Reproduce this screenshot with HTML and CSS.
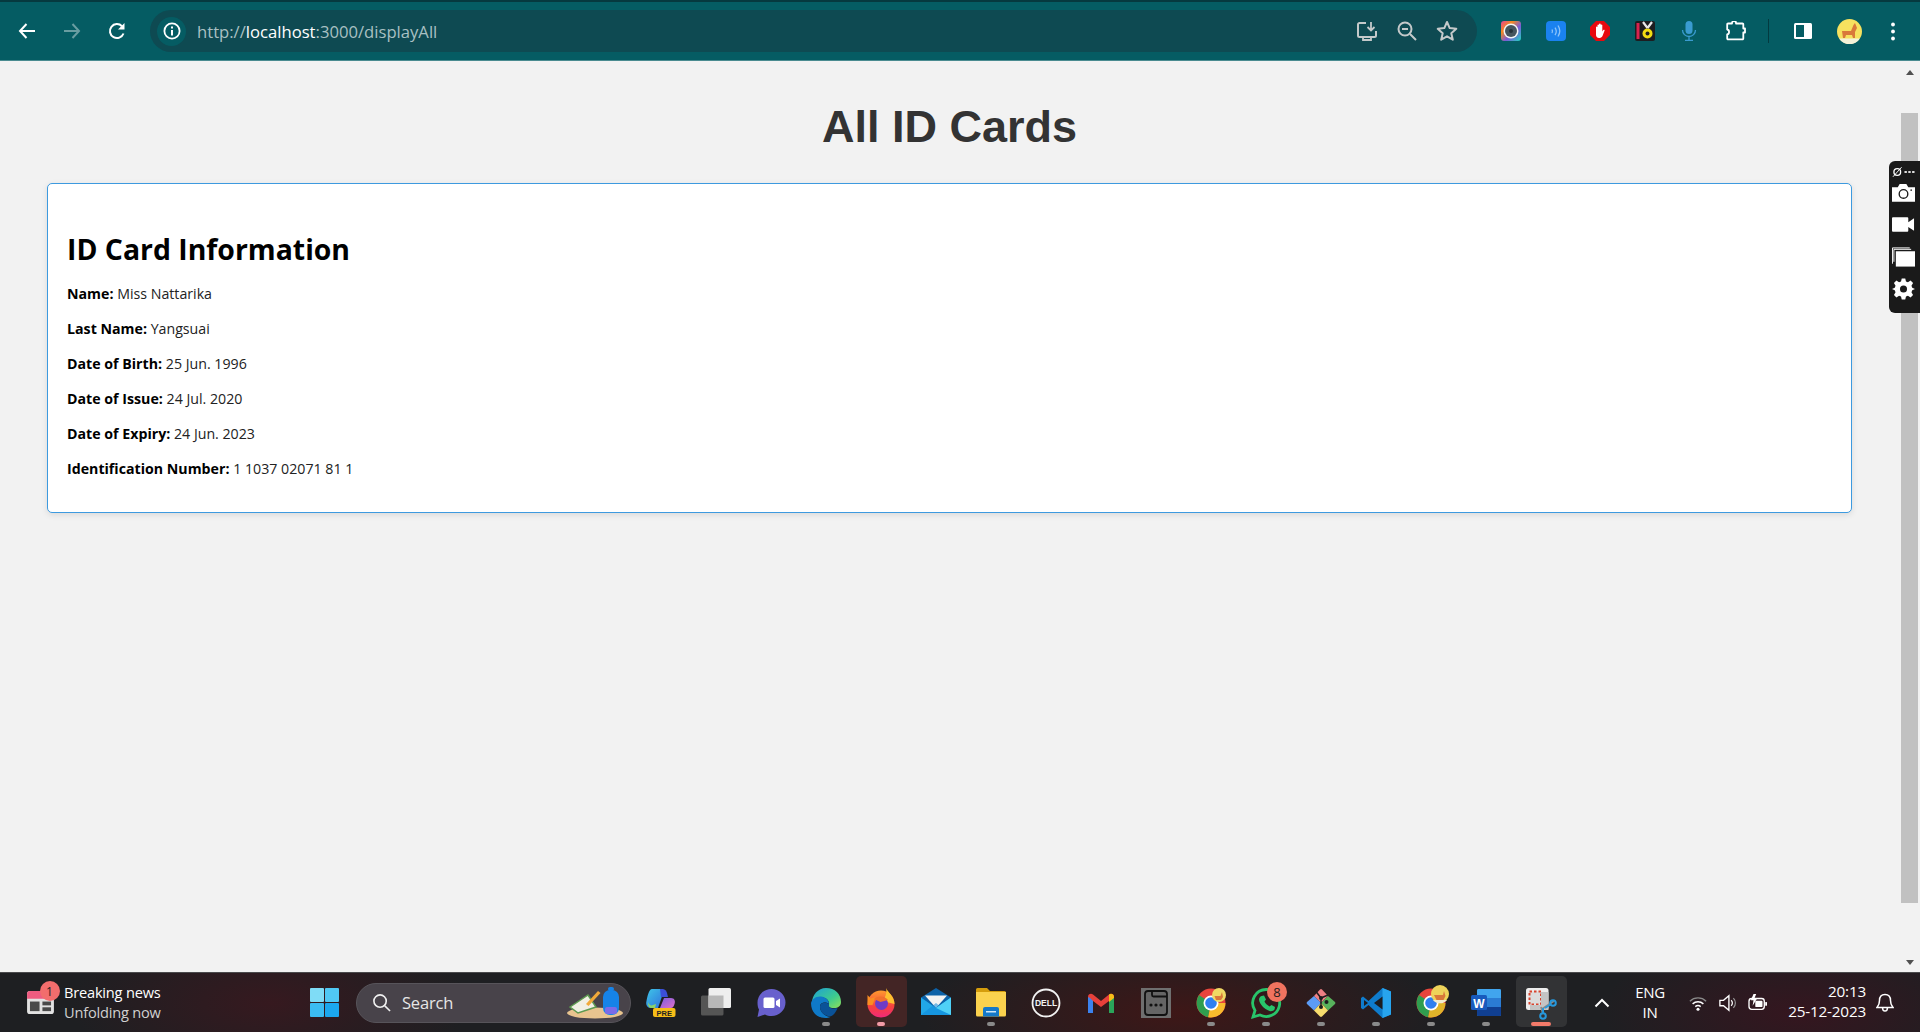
FILE: index.html
```html
<!DOCTYPE html>
<html lang="en">
<head>
<meta charset="utf-8">
<title>All ID Cards</title>
<link rel="stylesheet" href="styles.css">
</head>
<body>
<header class="browser">
  <div class="tabstrip"></div>
  <div class="toolbar">
    <div class="nav">
      <svg class="nav-icon" viewBox="0 0 24 24"><path d="M20 12H5M11.5 5 5 12l6.500 7" fill="none" stroke="#fff" stroke-width="2"/></svg>
      <svg class="nav-icon dim" viewBox="0 0 24 24"><path d="M4 12h15M12.500 5 19 12l-6.500 7" fill="none" stroke="#fff" stroke-width="2"/></svg>
      <svg class="nav-icon" viewBox="0 0 24 24"><path d="M18.500 14.500A7 7 0 1 1 17 7.200" fill="none" stroke="#fff" stroke-width="2"/><path d="M19.500 4v6.500H13z" fill="#fff"/></svg>
    </div>
    <div class="omnibox">
      <span class="site-info"><svg viewBox="0 0 20 20"><circle cx="10" cy="10" r="7.600" fill="none" stroke="#fff" stroke-width="1.800"/><path d="M9 9h2v5.500H9zM9 5.500h2v2H9z" fill="#fff"/></svg></span>
      <span class="url">http://<b>localhost</b>:3000/displayAll</span>
      <span class="omni-actions">
        <svg class="omni-icon" viewBox="0 0 24 24"><path d="M11 4H4.500A1.500 1.500 0 0 0 3 5.500v11A1.500 1.500 0 0 0 4.500 18h15a1.500 1.500 0 0 0 1.500-1.500V12" fill="none" stroke="#c4c9ca" stroke-width="2"/><path d="M8 21h8v-3H8zM16 3v8M12.500 8l3.500 3.500L19.500 8" fill="none" stroke="#c4c9ca" stroke-width="1.800"/></svg>
        <svg class="omni-icon" viewBox="0 0 24 24"><circle cx="10" cy="10" r="6.500" fill="none" stroke="#c4c9ca" stroke-width="2"/><path d="M7 10h6M15 15l6 6" stroke="#c4c9ca" stroke-width="2"/></svg>
        <svg class="omni-icon" viewBox="0 0 24 24"><path d="m12 3 2.700 6.100 6.600.7-5 4.400 1.500 6.500-5.800-3.400-5.800 3.400 1.500-6.500-5-4.400 6.600-.7z" fill="none" stroke="#c4c9ca" stroke-width="2" stroke-linejoin="round"/></svg>
      </span>
    </div>
    <div class="extensions">
      <svg class="ext" viewBox="0 0 20 20"><defs><linearGradient id="camg" x1="0" y1="0" x2="1" y2="1"><stop offset="0" stop-color="#e8439a"/><stop offset=".3" stop-color="#f58a1f"/><stop offset=".6" stop-color="#7a5bd6"/><stop offset="1" stop-color="#20d6c0"/></linearGradient></defs><rect width="20" height="20" rx="3" fill="url(#camg)"/><circle cx="10" cy="10" r="7.500" fill="#f3f5f6"/><circle cx="10" cy="10" r="6" fill="#46555e"/><circle cx="10" cy="10" r="2" fill="#26323a"/></svg>
      <svg class="ext" viewBox="0 0 20 20"><rect width="20" height="20" rx="4" fill="#1a82f0"/><path d="M6 8.500a3.500 3.500 0 0 1 0 3.500M9 6.500a6.500 6.500 0 0 1 0 7.500M12 4.500a10 10 0 0 1 0 11" fill="none" stroke="#8fc5fa" stroke-width="1.300"/></svg>
      <svg class="ext" viewBox="0 0 20 20"><path d="M6 0h8l6 6v8l-6 6H6l-6-6V6z" fill="#e8090f"/><path d="M6 10V6a.8.8 0 0 1 1.500 0V4a.8.8 0 0 1 1.500 0V3.500a.8.8 0 0 1 1.800 0V4a.8.8 0 0 1 1.500 0v6.500l1-1.500c.8-.8 1.700 0 1.200.8L12.500 15c-.8 1.500-2 2-3.500 2-2 0-3-1.500-3-3z" fill="#fff"/></svg>
      <svg class="ext" viewBox="0 0 20 20"><rect width="20" height="20" rx="2" fill="#1d1d20"/><rect x="1.500" y="2" width="3" height="16" fill="#d8234f"/><circle cx="12.500" cy="12.500" r="5" fill="#f2dc12"/><circle cx="12.500" cy="12.500" r="2" fill="#1d1d20"/><path d="M8 1l4.500 6M17 1l-4.500 6" stroke="#e8e8e8" stroke-width="2.200"/></svg>
      <svg class="ext" viewBox="0 0 20 20"><rect x="6.500" y="0" width="7" height="13" rx="3.500" fill="#3a9bd0"/><path d="M3.500 9a6.500 6.500 0 0 0 13 0M10 15.500V19M6 19.500h8" fill="none" stroke="#3a9bd0" stroke-width="1.300"/></svg>
      <svg class="ext puzzle" viewBox="0 0 20 20"><path d="M6 2.500V2a2 2 0 0 1 4 0v.500h6.500a.8.8 0 0 1 .8.8V7.500h1.700v4h-1.700v6a.8.8 0 0 1-.8.8H2a.8.8 0 0 1-.8-.8v-4c2.500-.5 2.500-4.500 0-5V3.300a.8.8 0 0 1 .8-.8z" fill="none" stroke="#fff" stroke-width="1.800" stroke-linejoin="round"/></svg>
      <span class="ext-sep"></span>
      <svg class="ext" viewBox="0 0 20 20"><rect x="1" y="2" width="18" height="16" rx="1.500" fill="#fff"/><rect x="3" y="4" width="8" height="12" fill="#055c63"/></svg>
      <svg class="avatar" viewBox="0 0 25 25"><circle cx="12.500" cy="12.500" r="12.500" fill="#f6e15f"/><path d="M5 12h9l2.500-6 1.500-2 2 5-2 4v6h-2l-1-3H9l-1 3H6z" fill="#d9783a"/><path d="M2 19.500h21a12.500 12.500 0 0 1-21 0z" fill="#f4f1d8"/></svg>
      <svg class="menu" viewBox="0 0 6 24"><circle cx="3" cy="4" r="2.200" fill="#fff"/><circle cx="3" cy="12" r="2.200" fill="#fff"/><circle cx="3" cy="20" r="2.200" fill="#fff"/></svg>
    </div>
  </div>
</header>

<div class="viewport">
  <main class="page">
    <h1 class="title">All ID Cards</h1>
    <section class="card">
      <h2 class="card-title">ID Card Information</h2>
      <p class="row"><strong>Name:</strong> Miss Nattarika</p>
      <p class="row"><strong>Last Name:</strong> Yangsuai</p>
      <p class="row"><strong>Date of Birth:</strong> 25 Jun. 1996</p>
      <p class="row"><strong>Date of Issue:</strong> 24 Jul. 2020</p>
      <p class="row"><strong>Date of Expiry:</strong> 24 Jun. 2023</p>
      <p class="row"><strong>Identification Number:</strong> 1 1037 02071 81 1</p>
    </section>
  </main>
  <div class="scrollbar">
    <span class="arrow up"></span>
    <span class="thumb"></span>
    <span class="arrow down"></span>
  </div>
  <aside class="capture">
    <svg class="cap-top" viewBox="0 0 24 10"><circle cx="5.500" cy="5" r="3.500" fill="none" stroke="#fff" stroke-width="1.400"/><path d="M1 10 10 0" stroke="#fff"/><path d="M13 4h2.500v2H13zM17 4h2.500v2H17zM21 4h2.500v2H21z" fill="#ddd"/></svg>
    <svg class="cap-icon" viewBox="0 0 24 20"><path d="M0 4h6l2-3.500h7L17 4h7v15H0z" fill="#fff"/><circle cx="12" cy="11" r="4.500" fill="none" stroke="#1a1a1a" stroke-width="1.400"/><circle cx="20" cy="7" r=".8" fill="#1a1a1a"/></svg>
    <svg class="cap-icon" viewBox="0 0 24 20"><path d="M1 2h15a1 1 0 0 1 1 1v4l6-4v13l-6-4v4a1 1 0 0 1-1 1H1a1 1 0 0 1-1-1V3a1 1 0 0 1 1-1z" fill="#fff"/></svg>
    <svg class="cap-icon" viewBox="0 0 24 20"><path d="M4 4h20v16H4z" fill="#fff"/><path d="M.5 17V.5h18" fill="none" stroke="#fff"/><path d="M2 15V2h18" fill="none" stroke="#fff"/></svg>
    <svg class="cap-icon" viewBox="-1 -1 26 26"><path d="M10 0h4l.8 3.400 2.200.9 3-1.800 2.800 2.800-1.800 3 .9 2.200L25 12l-3.100 1.500-.9 2.200 1.800 3-2.800 2.800-3-1.800-2.200.9L14 24h-4l-.8-3.400-2.200-.9-3 1.800-2.800-2.800 1.800-3-.9-2.200L-1 12l3.100-1.500.9-2.200-1.800-3L4 2.500l3 1.800 2.200-.9z" fill="#fff"/><circle cx="12" cy="12" r="4" fill="#1a1a1a"/></svg>
  </aside>
</div>

<footer class="taskbar">
  <div class="news">
    <span class="news-icon">
      <svg viewBox="0 2 28 24"><rect y="2" width="28" height="24" rx="3" fill="#e2e2e2"/><path d="M0 5a3 3 0 0 1 3-3h22a3 3 0 0 1 3 3v5H0z" fill="#ee5b80"/><rect x="3" y="13" width="10" height="10" fill="#4a4a4a"/><rect x="16" y="13" width="9" height="4" fill="#4a4a4a"/><rect x="16" y="19" width="9" height="4" fill="#4a4a4a"/></svg>
      <span class="badge news-badge">1</span>
    </span>
    <span class="news-text"><span>Breaking news</span><span class="muted">Unfolding now</span></span>
  </div>
  <svg class="win" viewBox="0 0 29 29"><rect width="14" height="14" rx="1" fill="#7fdcf6"/><rect x="15" width="14" height="14" rx="1" fill="#50c8f4"/><rect y="15" width="14" height="14" rx="1" fill="#3bbcf2"/><rect x="15" y="15" width="14" height="14" rx="1" fill="#1ba7ee"/></svg>
  <div class="search">
    <svg class="search-icon" viewBox="0 0 20 20"><circle cx="8.500" cy="8.500" r="6.500" fill="none" stroke="#f0f0f0" stroke-width="1.700"/><path d="m13.500 13.500 5.500 5.500" stroke="#f0f0f0" stroke-width="1.700"/></svg>
    <span class="search-text">Search</span>
    <svg class="search-art" viewBox="0 0 58 32"><ellipse cx="29" cy="26" rx="28" ry="5.500" fill="#e8c48f"/><path d="M4 20 22 8l8 12-18 6z" fill="#f1efe4" stroke="#5d9a50" stroke-width="1.500"/><path d="m20 17 12-13 2.500 2-12 13z" fill="#f1a93a"/><rect x="37" y="3" width="16" height="25" rx="7" fill="#1683e8"/><rect x="42" y="0" width="6" height="4" rx="2" fill="#1683e8"/><rect x="39" y="20" width="12" height="7" rx="2" fill="#7b6be8"/></svg>
  </div>
  <div class="apps">
    <span class="app"><svg viewBox="0 0 30 30"><defs><linearGradient id="cp1" x1="0" y1="0" x2="1" y2="1"><stop offset="0" stop-color="#3ec6e8"/><stop offset="1" stop-color="#2f6fdc"/></linearGradient><linearGradient id="cp2" x1="0" y1="0" x2="1" y2="1"><stop offset="0" stop-color="#7a5ce0"/><stop offset="1" stop-color="#e070c8"/></linearGradient></defs><path d="M6 1h9c2.500 0 3 2 2.500 3L12 20H5C1 20-.5 16.500.5 13 1.500 8 3 1 6 1z" fill="url(#cp1)"/><path d="M14 1h2c3 0 4.500 2 5 4l1 4h-7z" fill="#3b4fd8"/><path d="M14 20l4-10h7c3.500 0 4.500 3 3.500 6-1 3-2 4-3.500 4z" fill="url(#cp2)"/><path d="M2 14c1 3 3 4 5 3l3-1-1 4H5c-2 0-3-2-3-6z" fill="#8bd16a"/><rect x="7" y="20" width="22.500" height="9" rx="2" fill="#f6bd18"/><text x="18.300" y="27.500" class="pre">PRE</text></svg></span>
    <span class="app"><svg viewBox="0 0 30 30"><rect y="7.500" width="22.500" height="20" rx="1.500" fill="#555"/><rect x="7.500" width="22.500" height="20" rx="1.500" fill="#eee"/><rect x="7.500" y="7.500" width="15" height="12.500" fill="#b8b8b8"/></svg></span>
    <span class="app"><svg viewBox="0 0 30 30"><path d="M15.500 1a14 13.500 0 0 1 0 27c-2.500 0-4.500-.5-6.500-1.500L1.500 29 3 21.500C1.800 19.500 1.500 17 1.500 14.500A14 13.500 0 0 1 15.500 1z" fill="#6860cd"/><rect x="7.500" y="9.500" width="11" height="10.500" rx="1.500" fill="#fff"/><path d="m20 13 4-2.500v9L20 17z" fill="#fff"/></svg></span>
    <span class="app dot"><svg viewBox="0 0 30 30"><defs><linearGradient id="edg" x1="0" y1="0" x2="1" y2="1"><stop offset="0" stop-color="#1d9fd8"/><stop offset=".6" stop-color="#3dcb8e"/><stop offset="1" stop-color="#8fe05a"/></linearGradient></defs><path d="M15 0c9 0 15 6 15 14 0 4-3 6-7 6-5 0-6-1.500-5-4 0-4-3-6.500-7-6.500S3 12 1 15C1 7 7 0 15 0z" fill="url(#edg)"/><path d="M0 15c1-4 5-7 10-6.500 4 .5 8 3 8 7.500-2-2-9-2.500-9 3 0 5 6 11 11.500 9.500C18 30 16 30 14.500 30 6 30 0 24 0 15z" fill="#0f79c8"/><path d="M9 19c0-5 6-5 9-3-.5 3 1 4.500 5 4.500 2 0 3-.5 3.500 0-2 4-4 6.500-6 7.500C14 29 9 24 9 19z" fill="#0a5298"/></svg></span>
    <span class="app active rose"><svg viewBox="0 0 30 30"><defs><linearGradient id="ffg" x1="0" y1="0" x2="0" y2="1"><stop offset="0" stop-color="#ff9a2e"/><stop offset=".6" stop-color="#f5413f"/><stop offset="1" stop-color="#f0297a"/></linearGradient></defs><circle cx="15" cy="16" r="13.500" fill="url(#ffg)"/><path d="M20 0c1.500 4 8.500 8 8.500 16l-8-2C15 12 22 8 20 0z" fill="#fdc02f"/><path d="M1.500 7l3 3.500 5-1.500-3 8H1.500z" fill="#fb8e22"/><circle cx="15.500" cy="15.500" r="6.500" fill="#6d3bc6"/><path d="M8 11c4-4 11-3 14 1l-7.500 2z" fill="#f2702c"/></svg></span>
    <span class="app"><svg viewBox="0 0 30 30"><path d="M0 9.500 15 0l15 9.500V27H0z" fill="#0c62a8"/><path d="M4 7.500h22L15 20z" fill="#f2f2f2"/><path d="M0 9.500V27h30V9.500L15 20z" fill="#21a7e8"/><path d="M0 27 15 15l15 12z" fill="#0f88d8" opacity=".55"/><path d="M15 20 30 9.500V27z" fill="#4fd0f6"/></svg></span>
    <span class="app dot"><svg viewBox="0 0 30 30"><path d="M0 1.500A1.500 1.500 0 0 1 1.500 0H11l3 3h14.500A1.500 1.500 0 0 1 30 4.500V8H0z" fill="#d59d0c"/><path d="M0 4h30v23a1.500 1.500 0 0 1-1.500 1.500h-27A1.500 1.500 0 0 1 0 27z" fill="#fbd24e"/><path d="M7 21a2 2 0 0 1 2-2h12a2 2 0 0 1 2 2v7.500H7z" fill="#1579c9"/><rect x="10" y="23" width="10" height="1.500" fill="#cfe7f7"/></svg></span>
    <span class="app"><svg viewBox="0 0 30 30"><circle cx="15" cy="15" r="13.500" fill="none" stroke="#f2f2f2" stroke-width="1.800"/><text x="15" y="18" class="dell">DELL</text></svg></span>
    <span class="app"><svg viewBox="0 0 30 30"><path d="M2 9c0-3 3-4 5-2.500L15 13l8-6.500c2-1.500 5-.5 5 2.500v16h-5V13l-8 6-8-6v12H2z" fill="#e7403a"/><path d="M2 9v16h5V13l-3-3z" fill="#3b82ee"/><path d="M23 13v12h5V9z" fill="#2aa55a"/><path d="M23 6.500c2-1.500 5-.5 5 2.500v1l-5 4z" fill="#f6bd18"/></svg></span>
    <span class="app"><svg viewBox="0 0 30 30"><rect width="30" height="30" fill="#6f6f6f"/><path d="M4 6a3 3 0 0 1 3-3h16a3 3 0 0 1 3 3v18a3 3 0 0 1-3 3H7a3 3 0 0 1-3-3z" fill="#656565" stroke="#111" stroke-width="1.800"/><path d="M11 3v4a1.500 1.500 0 0 0 1.500 1.500H26" fill="none" stroke="#111" stroke-width="1.800"/><circle cx="10" cy="17" r="1.600" fill="#111"/><circle cx="15" cy="17" r="1.600" fill="#111"/><circle cx="20" cy="17" r="1.600" fill="#111"/></svg></span>
    <span class="app dot"><svg viewBox="0 0 30 30"><circle cx="15" cy="15" r="14.500" fill="#e8453c"/><path d="M15 15H29.500A14.500 14.500 0 0 1 12 29.200z" fill="#f9bb2d"/><path d="M12 29.200 A14.500 14.500 0 0 1 3 7l12 8z" fill="#2f9e4f"/><circle cx="15" cy="15" r="7.500" fill="#fff"/><circle cx="15" cy="15" r="5.800" fill="#2f7ff0"/><circle cx="23" cy="7" r="7" fill="#f0d964"/><path d="M18.500 8h6l1.500-4 1 5-2 3h-5z" fill="#d9783a"/></svg></span>
    <span class="app dot"><svg viewBox="0 0 30 30"><path d="M15.500 1.500a13.500 13.500 0 1 1-6.500 25.500L2 29l2-6.500A13.500 13.500 0 0 1 15.500 1.500z" fill="none" stroke="#28c46a" stroke-width="2.800"/><path d="M10.500 8l2.500-.5 2 4-1.500 2c1 2 2.500 3.500 5 5l2-1.500 3.500 2-.5 2.500c-1 1.500-3 2-5 1.500C13 21 8.500 16 8 11.500c0-1.500 1-3 2.500-3.500z" fill="#28c46a"/></svg><span class="badge app-badge">8</span></span>
    <span class="app dot"><svg viewBox="0 0 30 30"><path d="M15 15 8 8l6-6.500a1.500 1.500 0 0 1 2 0l6 6.500z" fill="#ee7f84"/><path d="M15 15l-7-7-7 6a1.500 1.500 0 0 0 0 2l7 6.500z" fill="#5c9bf6"/><path d="M15 15l7-7 7 6a1.500 1.500 0 0 1 0 2l-7 6.500z" fill="#58b25c"/><path d="M15 15l-7 7.500 6 6a1.500 1.500 0 0 0 2 0l6-6z" fill="#f8dc6d"/><path d="M10 3.500 15 10l7-3M15 10v9" fill="none" stroke="#1d1d20" stroke-width="1.500"/><circle cx="15" cy="19" r="2" fill="#1d1d20"/><circle cx="20.500" cy="14" r="2" fill="#1d1d20"/><circle cx="15" cy="10" r="2" fill="#1d1d20"/></svg></span>
    <span class="app dot"><svg viewBox="0 0 30 30"><path d="M21.500 0 30 3.500v23L21.500 30 7.500 17 2 21.500 0 20V10l2-1.500L7.500 13z" fill="#0f7ccc"/><path d="M21.500 0 30 3.500v23L21.500 30z" fill="#27a4ee"/><path d="M21.500 8.500v13L13 15z" fill="#1d1d20"/><path d="M3 12l4 3-4 3z" fill="#1d1d20"/></svg></span>
    <span class="app dot"><svg viewBox="0 0 30 30"><circle cx="15" cy="15" r="14.500" fill="#e8453c"/><path d="M15 15H29.500A14.500 14.500 0 0 1 12 29.200z" fill="#e0b42a"/><path d="M12 29.200 A14.500 14.500 0 0 1 3 7l12 8z" fill="#2f9e4f"/><circle cx="15" cy="15" r="7.500" fill="#fff"/><circle cx="15" cy="15" r="5.800" fill="#2f7ff0"/><circle cx="24" cy="6" r="9" fill="#eed35a"/><path d="M18 7h9l1-4 1.500 5-2 4h-7z" fill="#d9783a"/><path d="M17 12h14a9 9 0 0 1-14 0z" fill="#f2ecd0"/></svg></span>
    <span class="app dot"><svg viewBox="0 0 30 30"><rect x="6" y="1" width="24" height="27" rx="1.500" fill="#2b7cd3"/><path d="M6 2.500A1.500 1.500 0 0 1 7.500 1h21A1.500 1.500 0 0 1 30 2.500V10H6z" fill="#41a5ee"/><path d="M6 19h24v7.500a1.500 1.500 0 0 1-1.500 1.500h-21A1.500 1.500 0 0 1 6 26.500z" fill="#103f91"/><rect y="7" width="16" height="15" rx="1.500" fill="#185abd"/><text x="8" y="19.500" class="word">W</text></svg></span>
    <span class="app active snip"><svg viewBox="0 0 30 30"><rect y="0" width="22.500" height="22" rx="2.500" fill="#ededed"/><rect x="3.500" y="3.500" width="11.500" height="13" fill="#dcdcdc" stroke="#d8432d" stroke-width="2" stroke-dasharray="2.500 2"/><path d="M15 4h7.500v18H4v-5h11z" fill="#c4c4c4"/><path d="M28 13 16 21M15 19l2 7" stroke="#8a8a8a" stroke-width="1.800"/><circle cx="27" cy="15" r="2.800" fill="none" stroke="#2698dc" stroke-width="2"/><circle cx="17" cy="28" r="2.800" fill="none" stroke="#2698dc" stroke-width="2"/><path d="M24.500 16.500 19 20M17 20v5" stroke="#2698dc" stroke-width="2"/></svg></span>
  </div>
  <div class="tray">
    <svg class="chev" viewBox="0 0 16 10"><path d="M1.500 8.500 8 2l6.500 6.500" fill="none" stroke="#fff" stroke-width="2"/></svg>
    <span class="lang"><span>ENG</span><span>IN</span></span>
    <span class="tray-icons">
      <svg viewBox="0 0 20 20"><path d="M1 8a13 13 0 0 1 18 0" fill="none" stroke="#8a8a8a" stroke-width="1.500"/><path d="M4 11a9 9 0 0 1 12 0M7 14a5 5 0 0 1 6 0" fill="none" stroke="#fff" stroke-width="1.600"/><circle cx="10" cy="17" r="1.700" fill="#fff"/></svg>
      <svg viewBox="0 0 20 20"><path d="M1 7h4l6-5v16l-6-5H1z" fill="none" stroke="#fff" stroke-width="1.500"/><path d="M13.500 7a4 4 0 0 1 0 6" fill="none" stroke="#fff" stroke-width="1.400"/><path d="M16 4.500a8 8 0 0 1 0 11" fill="none" stroke="#999" stroke-width="1.300"/></svg>
      <svg viewBox="0 0 22 20"><rect x="1" y="5" width="17" height="12" rx="3" fill="none" stroke="#fff" stroke-width="1.500"/><rect x="8" y="7.500" width="8" height="7" rx="1" fill="#fff"/><path d="M6 0 3 7h3l-1 6 5-8H7l2-5z" fill="#fff"/><rect x="19" y="9" width="2" height="4" fill="#fff"/></svg>
    </span>
    <span class="clock"><span>20:13</span><span>25-12-2023</span></span>
    <svg class="bell" viewBox="0 0 18 20"><path d="M9 1.500c-3.500 0-5.500 2.500-5.500 6 0 4-1 5-2.500 7h16c-1.500-2-2.500-3-2.500-7 0-3.500-2-6-5.500-6zM6.500 14.500a2.500 3.500 0 0 0 5 0" fill="none" stroke="#fff" stroke-width="1.500"/></svg>
  </div>
</footer>
</body>
</html>
```

FILE: styles.css
```css
* { box-sizing: border-box; }
html, body { height: 100%; margin: 0; }
body {
  display: flex;
  flex-direction: column;
  height: 100vh;
  overflow: hidden;
  background: #f2f2f2;
  font-family: "Open Sans", "Noto Sans", sans-serif;
}

/* Browser chrome */
.browser { flex: none; height: 61px; background: #055c63; border-bottom: 1px solid #4a8b90; }
.tabstrip { height: 2px; background: #06393f; }
.toolbar { display: flex; align-items: center; height: 58px; }
.nav { display: flex; align-items: center; gap: 21px; width: 150px; padding-left: 15px; }
.nav-icon { width: 24px; height: 24px; }
.dim { opacity: .4; }
.omnibox {
  display: flex;
  align-items: center;
  width: 1327px;
  height: 42px;
  border-radius: 21px;
  background: #0e4a52;
  padding: 0 18px 0 7px;
}
.site-info {
  display: flex;
  align-items: center;
  justify-content: center;
  width: 29px;
  height: 29px;
  border-radius: 50%;
  background: #055c63;
}
.site-info svg { width: 20px; height: 20px; }
.url { margin-left: 11px; font-size: 16.650px; color: #a9c0c3; }
.url b { font-weight: 400; color: #fff; }
.omni-actions { display: flex; align-items: center; gap: 16px; margin-left: auto; }
.omni-icon { width: 24px; height: 24px; }
.extensions { display: flex; align-items: center; flex: 1; padding-left: 24px; }
.ext { width: 20px; height: 20px; margin-right: 24.600px; flex: none; }
.puzzle { margin-left: 2px; }
.ext-sep { width: 1px; height: 24px; background: #033a40; margin: 0 24px 0 -3px; flex: none; }
.avatar { width: 25px; height: 25px; margin: 0 28.500px 0 -.5px; flex: none; }
.menu { width: 6px; height: 21px; flex: none; }

/* Page area */
.viewport { flex: 1; min-height: 0; position: relative; display: flex; }
.page { flex: 1; min-width: 0; padding: 0 49px 0 47px; }
.title {
  margin: 0;
  padding-top: 36px;
  height: 122px;
  text-align: center;
  font: 700 45px/60px "Liberation Sans", sans-serif;
  color: #333;
}
.card {
  height: 330px;
  padding: 20px 19px;
  background: #fff;
  border: 1px solid #3d9adf;
  border-radius: 5px;
  box-shadow: 0 2px 6px rgba(0, 0, 0, .1);
}
.card-title { margin: 26px 0 16px; font-size: 28.400px; line-height: 38px; font-weight: 700; color: #000; }
.row { margin: 0 0 15px; font-size: 14.200px; line-height: 20px; color: #222; }
.row strong { color: #000; }

.scrollbar { flex: none; width: 19px; display: flex; flex-direction: column; align-items: center; padding: 9px 2px 7px 0; }
.thumb { width: 17px; height: 790px; margin: 38px 0 0; background: #c1c1c1; }
.arrow { width: 0; height: 0; border-left: 4.500px solid transparent; border-right: 4.500px solid transparent; }
.arrow.up { border-bottom: 5px solid #505050; }
.arrow.down { margin-top: auto; border-top: 5px solid #505050; }

.capture {
  position: absolute;
  right: 0;
  top: 100px;
  width: 31px;
  height: 152px;
  display: flex;
  flex-direction: column;
  align-items: flex-start;
  gap: 8px;
  padding: 6px 5px 0 3px;
  background: #1a1a1a;
  border-radius: 6px 0 0 6px;
}
.cap-top { width: 23px; height: 10px; flex: none; margin-bottom: -4px; }
.cap-icon { width: 23px; height: 24px; flex: none; }

/* Taskbar */
.taskbar {
  flex: none;
  display: flex;
  align-items: center;
  height: 60px;
  border-top: 1px solid #4a4a4c;
  background: radial-gradient(ellipse 200px 80px at 270px 30px, #36191f 0, transparent 100%),
              radial-gradient(ellipse 260px 80px at 1180px 40px, #3e1717 0, transparent 100%),
              radial-gradient(ellipse 200px 80px at 1800px 40px, #35161f 0, transparent 100%),
              #1e1f22;
  color: #fff;
  font-family: "Open Sans", sans-serif;
}
.news { display: flex; align-items: center; flex: none; width: 310px; padding-left: 26.500px; }
.news-icon { position: relative; width: 27px; height: 23px; margin-right: 10.500px; flex: none; }
.news-icon svg { width: 27px; height: 23px; display: block; }
.badge {
  position: absolute;
  display: flex;
  align-items: center;
  justify-content: center;
  width: 20px;
  height: 20px;
  border-radius: 50%;
  background: #f26d6d;
  color: #222;
  font-size: 12px;
}
.news-badge { top: -10px; left: 13px; }
.news-text { display: flex; flex-direction: column; margin-top: -1px; font-size: 14.600px; line-height: 20px; letter-spacing: -.2px; }
.muted { color: #d0d0d0; }
.win { width: 29px; height: 29px; flex: none; }
.search {
  display: flex;
  align-items: center;
  flex: none;
  width: 275px;
  height: 40px;
  margin-left: 17px;
  padding: 0 6px 0 15px;
  border-radius: 20px;
  background: #48434a;
  border: 1px solid #57545a;
}
.search-icon { width: 19px; height: 19px; }
.search-text { margin-left: 11px; font-size: 16.500px; letter-spacing: -.2px; color: #e6e6e6; }
.search-art { width: 58px; height: 32px; margin-left: auto; }
.apps { display: flex; align-items: stretch; flex: none; height: 100%; margin-left: 2.500px; }
.app {
  position: relative;
  display: flex;
  align-items: center;
  justify-content: center;
  width: 55px;
  height: 100%;
}
.app > svg { width: 30px; height: 30px; overflow: visible; }
.app.dot::after, .app.active::after {
  content: "";
  position: absolute;
  left: 50%;
  bottom: 6px;
  width: 8px;
  height: 4px;
  margin-left: -4px;
  border-radius: 2px;
  background: #8a8a8a;
}
.app.active::before {
  content: "";
  position: absolute;
  left: 2px;
  right: 2px;
  top: 3px;
  bottom: 5px;
  border-radius: 5px;
  background: rgba(255, 255, 255, .09);
}
.app.active svg { position: relative; }
.app.rose::before { background: #432525; }
.app.rose::after { background: #f29ba7; }
.app.snip::after { width: 20px; margin-left: -10px; background: #f27a6a; }
.app-badge { top: 9px; right: 6.500px; color: #1d1d20; background: #f0735f; font-size: 13px; }
.pre { font: 800 7.500px "Liberation Sans", sans-serif; text-anchor: middle; fill: #222; }
.dell { font: 700 8.500px "Liberation Sans", sans-serif; text-anchor: middle; fill: #f2f2f2; }
.word { font: 700 12px "Liberation Sans", sans-serif; text-anchor: middle; fill: #fff; }
.tray { display: flex; align-items: center; flex: 1; height: 100%; }
.chev { width: 16px; height: 10px; margin-left: 25.500px; flex: none; }
.lang { display: flex; flex-direction: column; align-items: center; width: 40px; margin-left: 20px; margin-top: -2px; font-size: 15px; line-height: 20px; letter-spacing: -.3px; }
.tray-icons { display: flex; align-items: center; gap: 10px; margin-left: 17.500px; }
.tray-icons svg { width: 20px; height: 18px; }
.clock { display: flex; flex-direction: column; align-items: flex-end; width: 98.500px; margin-top: -3px; font-size: 15.300px; line-height: 20px; letter-spacing: -.2px; }
.bell { width: 18px; height: 20px; margin-left: 10px; flex: none; }
```
